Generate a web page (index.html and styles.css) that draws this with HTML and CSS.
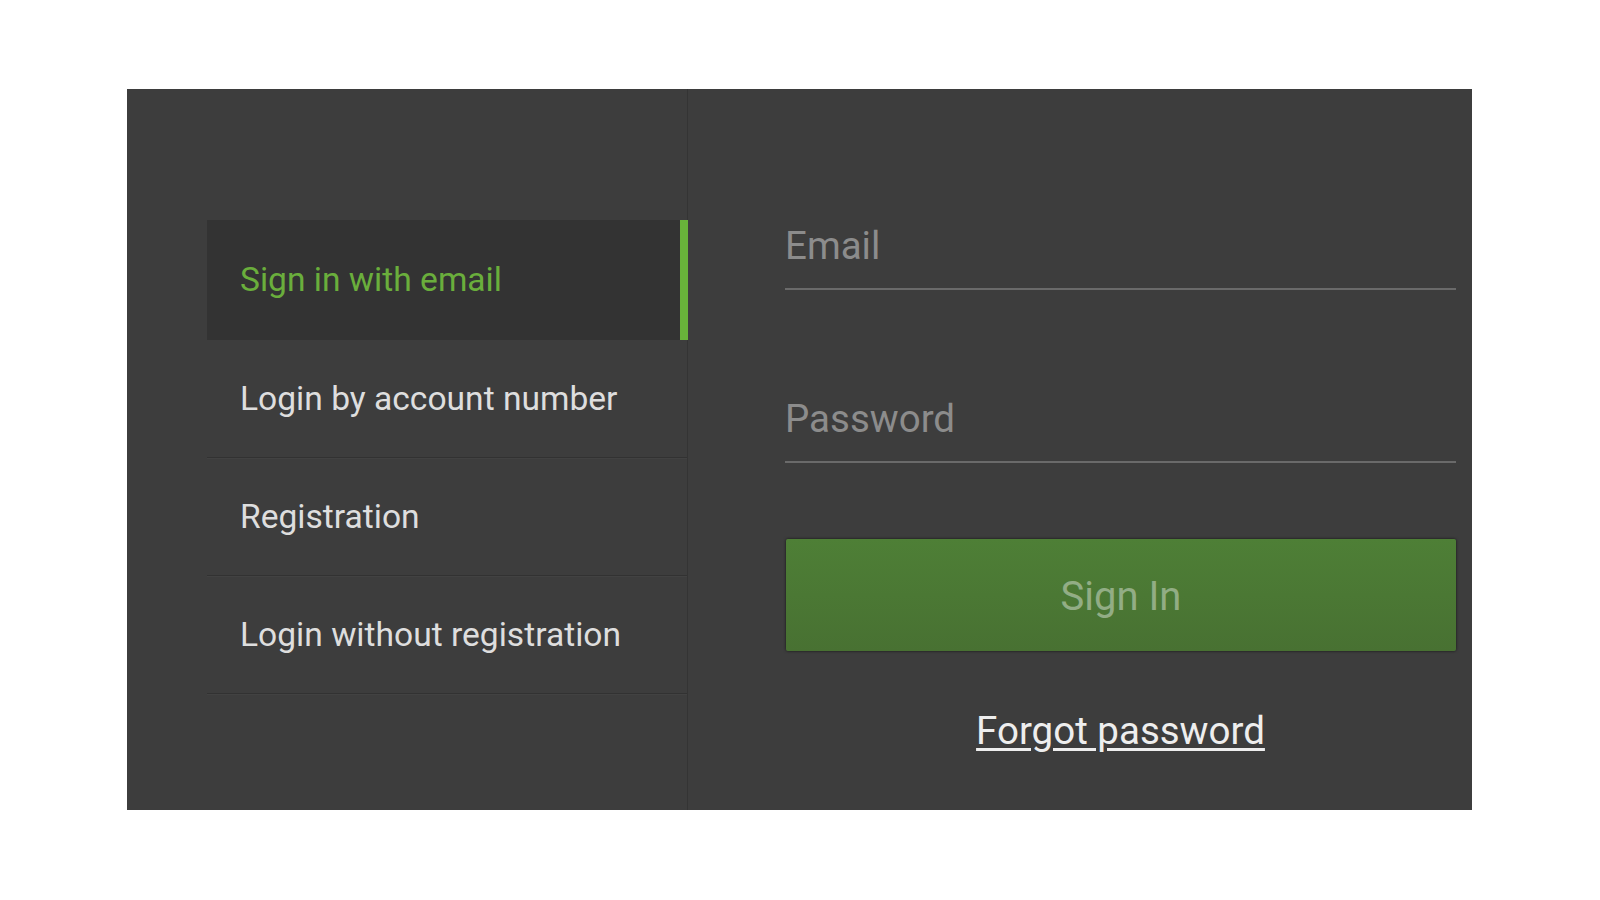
FILE: index.html
```
<!DOCTYPE html>
<html>
<head>
    <title>Sign In</title>
    <link rel="stylesheet" href="styles.css">
</head>
<body>
    <div class="panel">
        <div class="side">
            <ul class="menu">
                <li class="menu-item active">Sign in with email</li>
                <li class="menu-item">Login by account number</li>
                <li class="menu-item">Registration</li>
                <li class="menu-item">Login without registration</li>
            </ul>
        </div>

        <form class="login">
            <input type="text" class="field" placeholder="Email">
            <input type="password" class="field" placeholder="Password">
            <button type="button" class="submit">Sign In</button>
            <a href="#" class="forgot">Forgot password</a>
        </form>
    </div>
</body>
</html>
```
FILE: styles.css
```
body {
    margin: 0;
    background: #fff;
    font-family: Roboto, "Liberation Sans", sans-serif;
}

.panel {
    display: flex;
    width: 1345px;
    height: 721px;
    margin: 89px 0 0 127px;
    background-color: #3d3d3d;
}

.side {
    width: 561px;
    border-right: 1px solid #343434;
    padding-top: 131px;
    box-sizing: border-box;
}

.menu {
    list-style: none;
    margin: 0 0 0 80px;
    padding: 0;
}

.menu-item {
    position: relative;
    height: 117px;
    line-height: 117px;
    padding-left: 33px;
    font-size: 33.6px;
    color: #dedede;
    border-bottom: 1px solid #323232;
    box-shadow: 0 1px 0 #424242;
}

.menu-item.active {
    height: 120px;
    line-height: 120px;
    background-color: #333333;
    color: #6aae3c;
    border-bottom: none;
    box-shadow: none;
}

.menu-item.active::after {
    content: "";
    position: absolute;
    top: 0;
    right: -1px;
    width: 8px;
    height: 100%;
    background-color: #68b33a;
}

.login {
    display: flex;
    flex-direction: column;
    width: 671px;
    margin: 0;
    padding: 135px 0 0 97px;
}

.field {
    height: 44px;
    padding: 0 0 20px;
    margin-bottom: 107px;
    border: none;
    border-bottom: 2px solid #6a6a6a;
    background: transparent;
    font-family: Roboto, "Liberation Sans", sans-serif;
    font-size: 38.5px;
    line-height: 44px;
    color: #ddd;
    outline: none;
    box-sizing: content-box;
}

.field + .field {
    margin-bottom: 76px;
}

.field::placeholder {
    color: #8c8c8c;
}

.submit {
    height: 112px;
    margin-left: 1px;
    border: none;
    border-radius: 2px;
    background: linear-gradient(to bottom, #4e7f36, #487132);
    box-shadow: 0 0 3px rgba(0, 0, 0, 0.7);
    color: #92ad85;
    font-family: Roboto, "Liberation Sans", sans-serif;
    font-size: 40px;
    padding-top: 4px;
    cursor: pointer;
}

.forgot {
    align-self: center;
    margin-top: 58px;
    font-size: 38.5px;
    line-height: 44px;
    color: #eeeeee;
    text-decoration: underline;
    text-underline-offset: 4px;
}
```
